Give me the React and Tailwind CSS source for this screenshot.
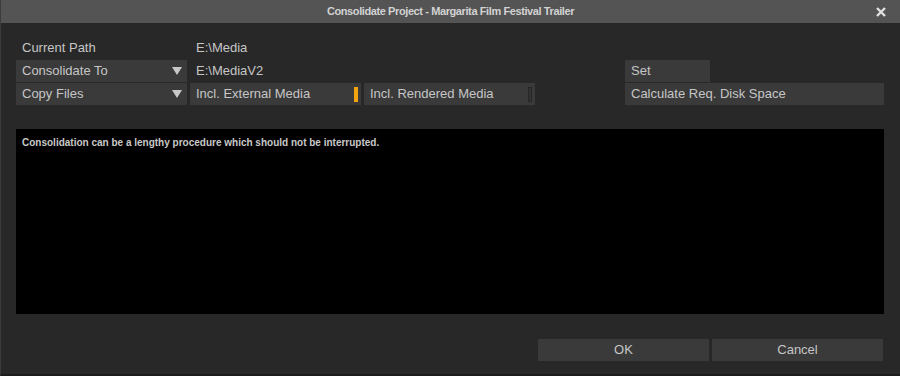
import { useState } from "react";

const font = { fontFamily: '"Liberation Sans", Arial, sans-serif' };

function Dropdown({ label }) {
  return (
    <div className="w-[171px] h-[22px] bg-[#3a3a3a] flex items-center justify-between pl-[6px] pr-[5px]">
      <span>{label}</span>
      <svg width="10" height="8" viewBox="0 0 10 8">
        <polygon points="0,0 10,0 5,8" fill="#c8c8c8" />
      </svg>
    </div>
  );
}

function Toggle({ label, on }) {
  return (
    <div className="w-[171px] h-[22px] bg-[#3a3a3a] flex items-center justify-between pl-[6px] pr-[3px]">
      <span>{label}</span>
      {on ? (
        <div className="w-[4px] h-[15px] bg-[#f2a30f]" />
      ) : (
        <div className="w-[4px] h-[15px] border border-[#262626] bg-[#333]" />
      )}
    </div>
  );
}

export default function App() {
  const [external, setExternal] = useState(true);

  return (
    <div className="w-[900px] h-[376px] bg-[#282828] text-[#c6c6c6] text-[13px] flex flex-col border-l border-[#3c3c3c] border-b-2 border-b-[#1c1c1c]" style={font}>
      {/* TITLE */}
      <div className="h-[23px] bg-[#545454] flex items-center justify-center relative shrink-0">
        <span className="text-[11px] font-bold text-[#d2d2d2] tracking-[-0.4px]">
          Consolidate Project - Margarita Film Festival Trailer
        </span>
        <svg className="absolute right-[14px] top-[7px]" width="10" height="10" viewBox="0 0 10 10">
          <path d="M1 1 L9 9 M9 1 L1 9" stroke="#e0e0e0" strokeWidth="2.4" />
        </svg>
      </div>

      {/* FORM */}
      <div className="pl-[15px] pt-[14px] flex flex-col gap-[1px]">
        <div className="h-[22px] flex items-center">
          <span className="w-[174px] pl-[6px]">Current Path</span>
          <span className="pl-[6px]">E:\Media</span>
        </div>
        <div className="h-[22px] flex items-center">
          <Dropdown label="Consolidate To" />
          <span className="w-[438px] pl-[9px]">E:\MediaV2</span>
          <div className="w-[85px] h-[22px] bg-[#3a3a3a] flex items-center pl-[6px]">Set</div>
        </div>
        <div className="h-[22px] flex items-center gap-[3px]">
          <Dropdown label="Copy Files" />
          <div onClick={() => setExternal(!external)}>
            <Toggle label="Incl. External Media" on={external} />
          </div>
          <Toggle label="Incl. Rendered Media" on={false} />
          <div className="w-[84px]" />
          <div className="w-[259px] h-[22px] bg-[#3a3a3a] flex items-center pl-[6px]">Calculate Req. Disk Space</div>
        </div>
      </div>

      {/* LOG */}
      <div className="ml-[15px] mt-[24px] w-[868px] h-[185px] bg-black px-[6px] pt-[6px]">
        <p className="text-[10px] font-bold text-[#c8c8c8]">Consolidation can be a lengthy procedure which should not be interrupted.</p>
      </div>

      {/* BUTTONS */}
      <div className="mt-[25px] flex gap-[3px] pl-[537px]">
        <div className="w-[171px] h-[22px] bg-[#3a3a3a] flex items-center justify-center">OK</div>
        <div className="w-[171px] h-[22px] bg-[#3a3a3a] flex items-center justify-center">Cancel</div>
      </div>
    </div>
  );
}
